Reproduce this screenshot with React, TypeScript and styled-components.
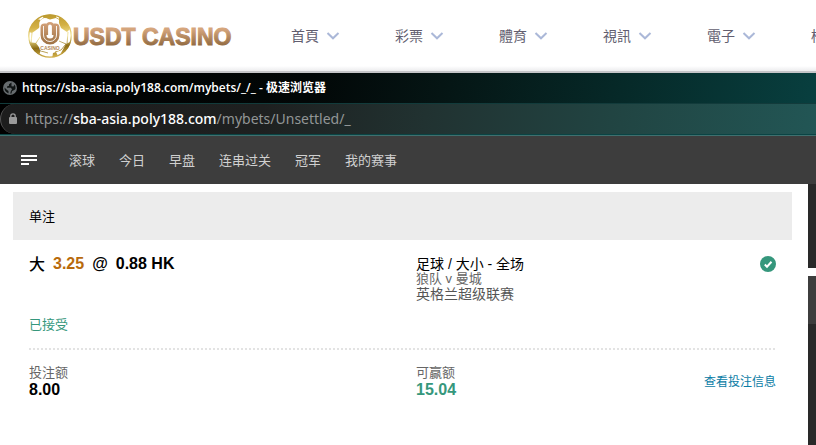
import React from 'react';
import styled, { createGlobalStyle } from 'styled-components';

const GlobalStyle = createGlobalStyle`
  *, *::before, *::after { box-sizing: border-box; }
  html { height: 100%; }
  body {
    margin: 0;
    min-height: 100%;
    background: #fff;
    overflow-x: hidden;
    font-family: "Liberation Sans", "Noto Sans CJK SC", sans-serif;
  }
  button, input { font: inherit; }
`;

const Page = styled.div`
  display: flex;
  flex-direction: column;
  min-height: 100vh;
`;

const SiteHeader = styled.header`
  display: flex;
  align-items: center;
  height: 73px;
  padding: 0 0 4px 26px;
  overflow: hidden;
  background: linear-gradient(#fff 66px, #ececee 71px, #c5c5c8 71px);
`;

const LogoLink = styled.a`
  display: block;
  flex: none;
  width: 265px;
  height: 48px;
  svg { display: block; }
`;

const SiteNav = styled.nav`
  display: flex;
  flex: 1;
  min-width: 0;
`;

const SiteNavItem = styled.button`
  display: flex;
  flex: none;
  align-items: center;
  gap: 7px;
  width: 103px;
  padding: 0;
  border: 0;
  background: none;
  color: #625e6f;
  font: 400 14px/20px "Noto Sans CJK TC", sans-serif;
  white-space: nowrap;
  cursor: pointer;
  & + & { margin-left: 1px; }
`;

const TitleBar = styled.div`
  display: flex;
  align-items: center;
  gap: 5px;
  height: 31px;
  padding: 0 3px;
  border-bottom: 1px solid #123b3b;
  background: linear-gradient(100deg, #000 0%, #020707 38%, #051514 54%, #062928 76%, #083f3f 100%);
  color: #fff;
  font: 600 12px/16px "Open Sans", "Noto Sans CJK SC", sans-serif;
  white-space: nowrap;
`;

const AddressFrame = styled.div`
  border-bottom: 1px solid #3f706f;
  box-shadow: inset 0 -1px #0a4444;
  padding-bottom: 1px;
  background: #000;
`;

const AddressBar = styled.div`
  display: flex;
  align-items: center;
  gap: 6px;
  height: 30px;
  padding: 0 6px;
  border-left: 1px solid #555;
  border-radius: 15px 0 0 15px;
  background: linear-gradient(100deg, #1d1d1d 0%, #1e2020 32%, #213231 52%, #214543 76%, #225655 100%);
  color: #929696;
  font: 400 14px/20px "Noto Sans", sans-serif;
  white-space: nowrap;
`;

const Host = styled.span`
  color: #fff;
  font-weight: 500;
`;

const SportsNav = styled.nav`
  display: flex;
  align-items: center;
  gap: 24px;
  height: 48px;
  padding: 0 21px;
  background: #3d3d3d;
`;

const MenuButton = styled.button`
  display: block;
  width: 24px;
  height: 24px;
  padding: 0;
  border: 0;
  background: none;
  cursor: pointer;
  svg { display: block; }
`;

const SportsLink = styled.a`
  color: #d0d0d0;
  font: 400 13px/20px "Noto Sans CJK SC", sans-serif;
  text-decoration: none;
  white-space: nowrap;
`;

const Body = styled.div`
  display: flex;
  flex: 1;
`;

const Bets = styled.main`
  flex: 1;
  min-width: 0;
  padding: 8px 16px 0 13px;
`;

const BetsHeading = styled.h1`
  margin: 0;
  padding: 0 16px;
  background: #ececec;
  color: #000;
  font: 400 13px/48px "Noto Sans CJK SC", sans-serif;
`;

const BetCard = styled.article`
  padding: 15px 16px 0;
`;

const BetRow = styled.div`
  display: grid;
  grid-template-columns: 387px 1fr auto;
`;

const Selection = styled.div`
  display: flex;
  gap: 8px;
  color: #000;
  font: 700 16px/18px "Liberation Sans", sans-serif;
`;

const Pick = styled.span`
  font: 500 16px/16px "Noto Sans CJK SC", sans-serif;
`;

const Handicap = styled.span`
  color: #b86a0c;
`;

const Market = styled.div`
  color: #000;
  font: 400 14px/16px "Liberation Sans", "Noto Sans CJK SC", sans-serif;
  padding-top: 1px;
`;

const Match = styled.div`
  color: #666;
  font: 400 13px/14px "Liberation Sans", "Noto Sans CJK SC", sans-serif;
`;

const League = styled.div`
  color: #555;
  font: 400 14px/16px "Liberation Sans", "Noto Sans CJK SC", sans-serif;
`;

const StatusIcon = styled.svg`
  display: block;
  margin-top: 1px;
`;

const Status = styled.p`
  margin: 12px 0 14px;
  color: #35977c;
  font: 400 13px/20px "Noto Sans CJK SC", sans-serif;
`;

const Divider = styled.hr`
  height: 2px;
  margin: 0;
  border: 0;
  background: repeating-linear-gradient(90deg, #e3e3e3 0 2px, transparent 2px 4px);
`;

const Amounts = styled(BetRow)`
  align-items: center;
  padding-top: 14px;
`;

const AmountLabel = styled.div`
  padding-bottom: 2px;
  color: #666;
  font: 400 13px/16px "Noto Sans CJK SC", sans-serif;
`;

const Amount = styled.div<{ $win?: boolean }>`
  color: ${p => (p.$win ? '#35977c' : '#000')};
  font: 700 16px/16px "Liberation Sans", sans-serif;
`;

const DetailsLink = styled.a`
  color: #0a7ca5;
  font: 400 12px/18px "Noto Sans CJK SC", sans-serif;
  text-decoration: none;
`;

const SideRail = styled.aside`
  display: flex;
  flex: none;
  flex-direction: column;
  gap: 8px;
  width: 8px;
`;

const RailBlock = styled.div<{ $fill?: boolean }>`
  flex: ${p => (p.$fill ? '1' : '0 0 84px')};
  border-top: ${p => (p.$fill ? '48px solid #3d3d3d' : '0')};
  background: #292929;
`;

const Logo = () => (
  <svg width="212" height="48" viewBox="0 0 212 48" role="img" aria-label="USDT CASINO">
    <defs>
      <linearGradient id="wordmark" x1="0" y1="0" x2="0" y2="1">
        <stop offset="0.2" stopColor="#d5a57c" />
        <stop offset="0.85" stopColor="#90693f" />
      </linearGradient>
      <linearGradient id="gold" gradientUnits="userSpaceOnUse" x1="20" y1="2" x2="24" y2="46">
        <stop offset="0" stopColor="#b8962c" />
        <stop offset="0.3" stopColor="#d3b044" />
        <stop offset="0.55" stopColor="#f3e492" />
        <stop offset="0.78" stopColor="#8c6c14" />
        <stop offset="1" stopColor="#d0ae48" />
      </linearGradient>
      <linearGradient id="monogram" gradientUnits="userSpaceOnUse" x1="0" y1="12" x2="0" y2="34">
        <stop offset="0" stopColor="#d2a078" />
        <stop offset="1" stopColor="#9b7042" />
      </linearGradient>
      <clipPath id="ball"><circle cx="24" cy="25" r="21.500" /></clipPath>
    </defs>
    <circle cx="24" cy="25" r="21.200" fill="#fff" stroke="url(#gold)" strokeWidth="1.200" />
    <g clipPath="url(#ball)" fill="url(#gold)">
      <path d="M17 3h13v4l-6 1.500-7-2z" />
      <path d="M5 14l6-6 4 1-2 8-7 5-3-1z" />
      <path d="M33 6l7 4 4 8-3 3-6-4-2-5z" />
      <path d="M2 31l8 1 5 7-2 5-8-5z" />
      <path d="M40 33l6-3-2 9-7 6-2-3z" />
      <path d="M27 42l3-1 2 4-4 3h-2z" />
    </g>
    <g clipPath="url(#ball)" fill="none" stroke="url(#gold)" strokeWidth="0.800">
      <path d="M15 9l4-3M29 6l5 3M6 22l-1 10M42 21l-1 12M10 32l4-6M15 40l7 2M29 41l6-2 5-6M33 30l7 3" />
    </g>
    <path d="M24 10a10 10 0 0 1 10 8v7a10 10 0 0 1-20 0v-9a5 5 0 0 1 10-6z" fill="#fff" />
    <path d="M20.500 12.500h-2a4 4 0 0 0-4 4v7.500a9.500 9.500 0 0 0 19 0v-7.500a4 4 0 0 0-4-4h-2v11.500a3.500 3.500 0 0 1-7 0z" fill="url(#monogram)" />
    <path d="M17.500 15v9a6.500 6.500 0 0 0 13 0v-9" fill="none" stroke="#fff" strokeWidth="0.900" />
    <path d="M20.800 24v-8.500a3.200 3.200 0 0 1 6.400 0V24" fill="none" stroke="url(#monogram)" strokeWidth="2.600" />
    <text x="24" y="39" textAnchor="middle" fill="#b48958" stroke="#fff" strokeWidth="1.500" paintOrder="stroke" fontFamily="Liberation Sans, sans-serif" fontSize="5" fontWeight="700">CASINO</text>
    <text x="47" y="34" fill="url(#wordmark)" stroke="url(#wordmark)" strokeWidth="1" fontFamily="Liberation Sans, sans-serif" fontSize="23" fontWeight="700">USDT CASINO</text>
  </svg>
);

const Chevron = () => (
  <svg width="14" height="14" viewBox="0 0 14 14" aria-hidden="true">
    <path d="M1.500 5l5.500 5.300L12.500 5" fill="none" stroke="#abb8d8" strokeWidth="2" />
  </svg>
);

const Globe = () => (
  <svg width="14" height="14" viewBox="0 0 14 14" aria-hidden="true">
    <circle cx="7" cy="7" r="7" fill="#666b6e" />
    <path d="M8.500 1.500L6 3.200v1.600L4 5.500v1.300h4l1 1.700-1 1.200-.8 2.800-1.700-.2V10L3.500 8.500 1.500 6.500A5.600 5.600 0 0 0 7 12.600l1.500-.2.500-2.200 3-1.700.5-1A5.600 5.600 0 0 0 11.500 3.500l-1 2-2-.3z" fill="#101414" />
  </svg>
);

const Lock = () => (
  <svg width="12" height="14" viewBox="0 0 12 14" aria-hidden="true">
    <rect x="2" y="5" width="8" height="7" rx="1" fill="#9a9a9a" />
    <path d="M3.800 6V4a2.200 2.200 0 0 1 4.400 0v2" fill="none" stroke="#9a9a9a" strokeWidth="1.300" />
  </svg>
);

const SITE_LINKS = ['首頁', '彩票', '體育', '視訊', '電子', '棋牌'];
const SPORTS_LINKS = ['滚球', '今日', '早盘', '连串过关', '冠军', '我的赛事'];

export default function App() {
  return (
    <Page>
      <GlobalStyle />
      <SiteHeader>
        <LogoLink href="#home"><Logo /></LogoLink>
        <SiteNav>
          {SITE_LINKS.map(label => (
            <SiteNavItem key={label} type="button">{label}<Chevron /></SiteNavItem>
          ))}
        </SiteNav>
      </SiteHeader>
      <TitleBar>
        <Globe />
        <span>https://sba-asia.poly188.com/mybets/_/_ - 极速浏览器</span>
      </TitleBar>
      <AddressFrame>
        <AddressBar>
          <Lock />
          <span>https://<Host>sba-asia.poly188.com</Host>/mybets/Unsettled/_</span>
        </AddressBar>
      </AddressFrame>
      <SportsNav>
        <MenuButton type="button" aria-label="菜单">
          <svg width="24" height="24" viewBox="0 0 24 24" aria-hidden="true">
            <path d="M0 8h16M0 12h16M0 16h8" stroke="#fff" strokeWidth="2" />
          </svg>
        </MenuButton>
        {SPORTS_LINKS.map(label => (
          <SportsLink key={label} href="#sports">{label}</SportsLink>
        ))}
      </SportsNav>
      <Body>
        <Bets>
          <BetsHeading>单注</BetsHeading>
          <BetCard>
            <BetRow>
              <Selection>
                <Pick>大</Pick>
                <Handicap>3.25</Handicap>
                <span>@</span>
                <span>0.88 HK</span>
              </Selection>
              <div>
                <Market>足球 / 大小 - 全场</Market>
                <Match>狼队 v 曼城</Match>
                <League>英格兰超级联赛</League>
              </div>
              <StatusIcon width="16" height="16" viewBox="0 0 16 16" role="img" aria-label="已接受">
                <circle cx="8" cy="8" r="8" fill="#35977c" />
                <path d="M4.800 8.500l2.200 2.200 4.500-4.900" fill="none" stroke="#fff" strokeWidth="2" />
              </StatusIcon>
            </BetRow>
            <Status>已接受</Status>
            <Divider />
            <Amounts>
              <div>
                <AmountLabel>投注额</AmountLabel>
                <Amount>8.00</Amount>
              </div>
              <div>
                <AmountLabel>可赢额</AmountLabel>
                <Amount $win>15.04</Amount>
              </div>
              <DetailsLink href="#details">查看投注信息</DetailsLink>
            </Amounts>
          </BetCard>
        </Bets>
        <SideRail>
          <RailBlock />
          <RailBlock $fill />
        </SideRail>
      </Body>
    </Page>
  );
}
